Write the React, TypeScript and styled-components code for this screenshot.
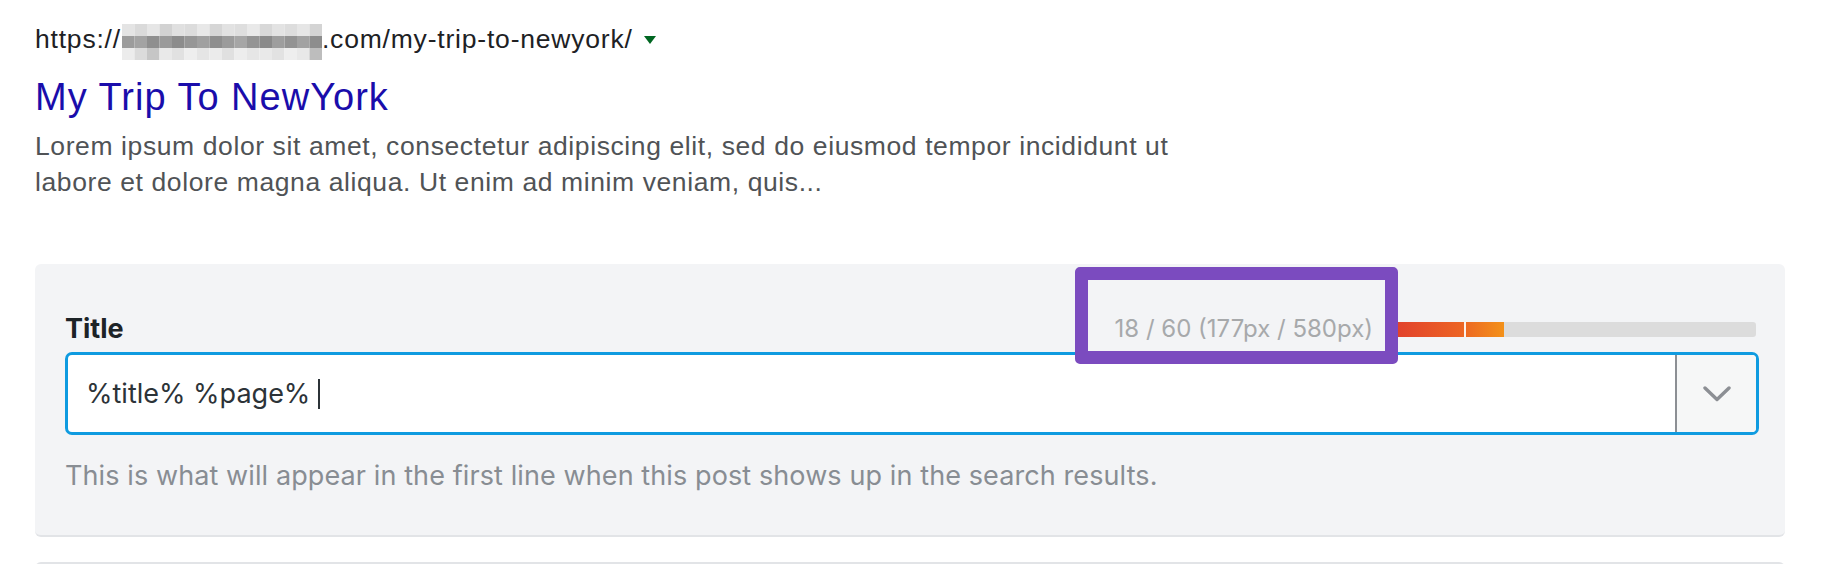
import React from "react";
import styled, { createGlobalStyle } from "styled-components";

const GlobalStyle = createGlobalStyle`
  body {
    margin: 0;
    background: #ffffff;
  }
`;

const Page = styled.div`
  padding: 0 37px 0 35px;
`;

const Snippet = styled.div`
  font-family: "Liberation Sans", Arial, sans-serif;
  padding-top: 21px;
`;

const UrlLine = styled.div`
  font-size: 26.5px;
  line-height: 36px;
  letter-spacing: 0.8px;
  color: #202124;
  white-space: nowrap;
`;

const Blur = styled.svg`
  display: inline-block;
  vertical-align: -12px;
  margin: 0 0 0 1px;
`;

const Caret = styled.span`
  display: inline-block;
  width: 0;
  height: 0;
  margin-left: 11px;
  vertical-align: 4px;
  border-left: 6px solid transparent;
  border-right: 6px solid transparent;
  border-top: 8px solid #006621;
`;

const SnippetTitle = styled.div`
  margin-top: 15px;
  font-size: 38px;
  line-height: 44px;
  letter-spacing: 1px;
  color: #1a0dab;
`;

const SnippetDesc = styled.div`
  margin-top: 9px;
  max-width: 1185px;
  font-size: 26.5px;
  line-height: 36px;
  letter-spacing: 0.6px;
  color: #505356;
`;

const Panel = styled.div`
  margin-top: 64px;
  padding: 47px 26px 41px 30px;
  background: #f3f4f6;
  border-radius: 6px;
  border-bottom: 2px solid #e2e4e7;
  font-family: Inter, "Noto Sans", sans-serif;
`;

const NextPanel = styled.div`
  margin-top: 25px;
  height: 40px;
  background: #f3f4f6;
  border-top: 2px solid #e2e4e7;
  border-radius: 6px 6px 0 0;
`;

const FieldHeader = styled.div`
  display: flex;
  align-items: center;
  height: 36px;
  margin-bottom: 5px;
`;

const Label = styled.label`
  font-size: 27px;
  line-height: 36px;
  font-weight: 700;
  color: #1d2327;
`;

const LengthInfo = styled.div`
  margin-left: auto;
  display: flex;
  align-items: center;
`;

const Counter = styled.span`
  position: relative;
  margin-right: 15px;
  font-size: 24px;
  line-height: 36px;
  color: #a7a9ab;

  &::after {
    content: "";
    position: absolute;
    top: -44px;
    bottom: -17px;
    left: -40px;
    right: -25px;
    border: 13px solid #7b4bbf;
    border-radius: 5px;
    z-index: 2;
    pointer-events: none;
  }
`;

const Meter = styled.div`
  position: relative;
  width: 368px;
  height: 15px;
  margin-right: 3px;
  background: #dcdcdc;
  border-radius: 0 3px 3px 0;
`;

const MeterFill = styled.div`
  height: 100%;
  background: linear-gradient(90deg, #e03d2d 0%, #ec6324 62%, #f39119 100%);
`;

const MeterMark = styled.span`
  position: absolute;
  top: 0;
  left: 76px;
  width: 2px;
  height: 100%;
  background: #ffffff;
  opacity: 0.9;
`;

const InputBox = styled.div`
  display: flex;
  height: 83px;
  box-sizing: border-box;
  border: 3px solid #0f9be0;
  border-radius: 7px;
  background: #ffffff;
  overflow: hidden;
`;

const InputValue = styled.div`
  flex: 1;
  display: flex;
  align-items: center;
  padding-left: 18px;
  font-size: 27px;
  color: #2c3338;
`;

const TextCursor = styled.span`
  display: inline-block;
  width: 2px;
  height: 30px;
  margin-left: 8px;
  background: #2c3338;
`;

const DropButton = styled.div`
  width: 79px;
  display: flex;
  align-items: center;
  justify-content: center;
  background: #f6f7f7;
  border-left: 2px solid #8c8f94;
`;

const Help = styled.p`
  margin: 23px 0 0;
  font-size: 27px;
  line-height: 36px;
  letter-spacing: 0.1px;
  color: #888d93;
`;

const blurRows = [
  ["#e4e4e4", "#dadada", "#e6e6e6", "#d2d2d2", "#e0e0e0", "#dcdcdc", "#e8e8e8", "#d6d6d6", "#e2e2e2", "#dedede", "#e9e9e9", "#d8d8d8", "#e3e3e3", "#dddddd", "#e6e6e6", "#d4d4d4"],
  ["#9c9c9c", "#a3a3a3", "#8f8f8f", "#9a9a9a", "#8c8c8c", "#969696", "#a0a0a0", "#8e8e8e", "#9b9b9b", "#a6a6a6", "#949494", "#8a8a8a", "#9e9e9e", "#939393", "#a2a2a2", "#8d8d8d"],
  ["#ececec", "#dbdbdb", "#c6c6c6", "#e9e9e9", "#e1e1e1", "#eeeeee", "#e5e5e5", "#ebebeb", "#e0e0e0", "#ededed", "#e6e6e6", "#e9e9e9", "#e2e2e2", "#eeeeee", "#e8e8e8", "#bdbdbd"],
];

function BlurredDomain() {
  return (
    <Blur width="200" height="36" viewBox="0 0 200 36">
      {blurRows.map((row, r) =>
        row.map((c, i) => (
          <rect key={`${r}-${i}`} x={i * 12.5} y={r * 12} width="12.5" height="12" fill={c} />
        ))
      )}
    </Blur>
  );
}

function Chevron() {
  return (
    <svg width="28" height="16" viewBox="0 0 28 16">
      <polyline
        points="2,2 14,13.5 26,2"
        fill="none"
        stroke="#8c8f94"
        strokeWidth="3.4"
        strokeLinecap="round"
        strokeLinejoin="round"
      />
    </svg>
  );
}

export default function App() {
  const chars = 18;
  const width = 177;
  const maxWidth = 580;

  return (
    <Page>
      <GlobalStyle />
      <Snippet>
        <UrlLine>
          https://
          <BlurredDomain />
          .com/my-trip-to-newyork/
          <Caret />
        </UrlLine>
        <SnippetTitle>My Trip To NewYork</SnippetTitle>
        <SnippetDesc>
          Lorem ipsum dolor sit amet, consectetur adipiscing elit, sed do eiusmod tempor
          incididunt ut labore et dolore magna aliqua. Ut enim ad minim veniam, quis...
        </SnippetDesc>
      </Snippet>

      <Panel>
        <FieldHeader>
          <Label>Title</Label>
          <LengthInfo>
            <Counter>
              {chars} / 60 ({width}px / {maxWidth}px)
            </Counter>
            <Meter>
              <MeterFill style={{ width: `${(width / maxWidth) * 100 + 1}%` }} />
              <MeterMark />
            </Meter>
          </LengthInfo>
        </FieldHeader>
        <InputBox>
          <InputValue>
            %title% %page%
            <TextCursor />
          </InputValue>
          <DropButton>
            <Chevron />
          </DropButton>
        </InputBox>
        <Help>
          This is what will appear in the first line when this post shows up in the search results.
        </Help>
      </Panel>
      <NextPanel />
    </Page>
  );
}
